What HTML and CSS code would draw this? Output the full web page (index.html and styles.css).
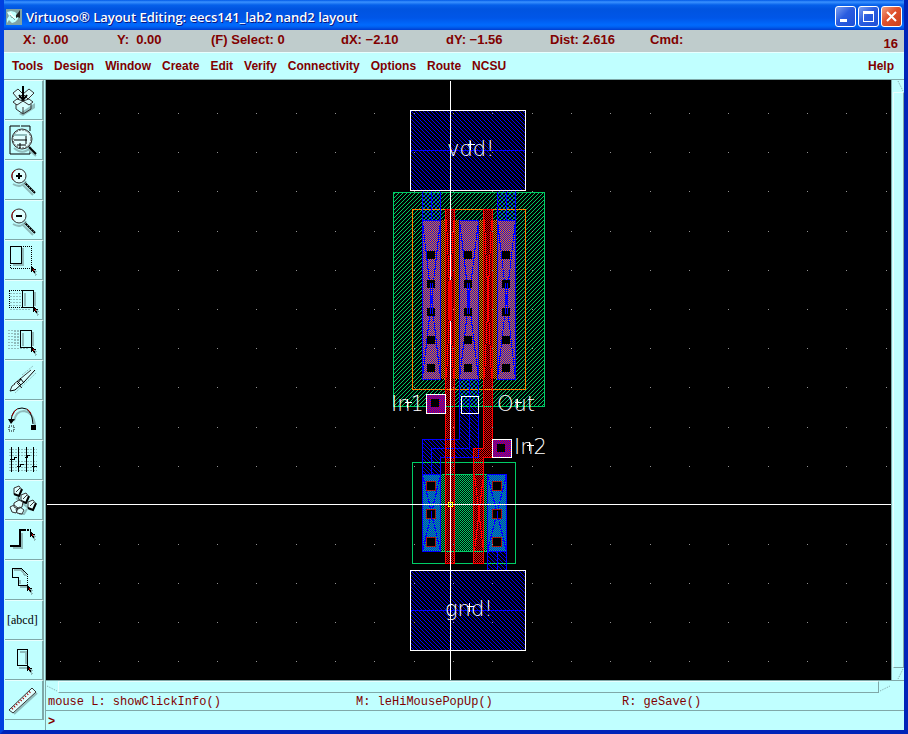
FILE: index.html
```html
<!DOCTYPE html>
<html lang="en">
<head>
    <meta charset="UTF-8">
    <meta name="viewport" content="width=device-width, initial-scale=1.0">
    <title>Virtuoso® Layout Editing: eecs141_lab2 nand2 layout</title>
    <link rel="stylesheet" href="styles.css">
</head>
<body>
    <!-- Shared cursor shape -->
    <svg class="defs" aria-hidden="true">
        <symbol id="cursor" viewBox="0 0 8 12" overflow="visible">
            <path class="shade" d="M2 3v8l2-2 2 4 2-1-2-4h3z"/>
            <path d="M0 0v8l2-2 2 4 2-1-2-4h3z"/>
            <path class="red" d="M3 4h1v2h-1z"/>
        </symbol>
    </svg>

    <header class="titlebar">
        <svg class="app-icon" viewBox="0 0 16 16">
            <rect width="16" height="16" fill="#7fa3a5"/>
            <path d="M1 3l4-1 4 1 3 3v4l-3 3-3 1-3-3-2 3v-4l2-3z" fill="#c0ffff"/>
            <path d="M12 4l2-3v8l-2-1-2 1v-3z" fill="#222"/>
            <path d="M6 8l3 3M4 6l2 3" stroke="#7fa3a5"/>
            <path d="M2 4l8 5M4 3l4 6" stroke="#fff"/>
        </svg>
        <h1>Virtuoso® Layout Editing: eecs141_lab2 nand2 layout</h1>
        <button class="win-btn" aria-label="Minimize"><svg viewBox="0 0 19 19"><path d="M4 12h7v3h-7z" fill="#fff"/></svg></button>
        <button class="win-btn" aria-label="Maximize"><svg viewBox="0 0 19 19"><path d="M4 4h11v11h-11zM5 7v7h9v-7z" fill="#fff" fill-rule="evenodd"/></svg></button>
        <button class="win-btn close" aria-label="Close"><svg viewBox="0 0 19 19"><path d="M5 5l9 9M14 5l-9 9" stroke="#fff" stroke-width="2"/></svg></button>
    </header>

    <div class="status">
        <span>X:  0.00</span>
        <span>Y:  0.00</span>
        <span>(F) Select: 0</span>
        <span>dX: −2.10</span>
        <span>dY: −1.56</span>
        <span>Dist: 2.616</span>
        <span>Cmd:</span>
        <span class="count">16</span>
    </div>

    <nav class="menu">
        <button>Tools</button>
        <button>Design</button>
        <button>Window</button>
        <button>Create</button>
        <button>Edit</button>
        <button>Verify</button>
        <button>Connectivity</button>
        <button>Options</button>
        <button>Route</button>
        <button>NCSU</button>
        <button class="help">Help</button>
    </nav>

    <div class="work">
        <div class="toolbar">
            <button aria-label="Save"><svg viewBox="0 0 38 38">
                <path class="shade" d="M14 33l4 2 12-8v-5l-12 8z"/>
                <path class="paper" d="M8 12l5-4 5 5 6-5 5 4-4 6 3 4-10 8-10-8 4-4z"/>
                <path class="thin" d="M8 12l5-4 5 5-5 5zM18 13l6-5 5 4-6 6zM12 18l-4 3 4 3 6-4zM24 18l4 3-4 3-6-4zM11 23v5l7 5 8-5v-5M18 26v6"/>
                <path class="thick" d="M18 5v13M14 14l4 5 4-5"/>
            </svg></button>
            <button aria-label="Fit"><svg viewBox="0 0 38 38">
                <path class="line" d="M15 5h-10v28h20v-4M16 5h9v5"/>
                <path class="shade-line" d="M23 28l8 7M9 27q9 8 17-1"/>
                <circle class="lens" cx="17" cy="18" r="10"/>
                <circle class="ring" cx="17" cy="18" r="9"/>
                <path class="line" d="M9 19h13M12 24h9M15 22v5M21 13v10"/>
                <path class="shade-line" d="M9 14h13"/>
                <path class="thick" d="M24 26l7 7"/>
            </svg></button>
            <button aria-label="Zoom in"><svg viewBox="0 0 38 38">
                <path class="shade-line" d="M18 24l10 10M8 23q8 5 13-3"/>
                <path class="thick" d="M20 22l10 10"/><path class="glint" d="M20 22l9 9"/>
                <circle class="lens" cx="14" cy="15" r="7"/>
                <path class="redline" d="M8 19a7 7 0 0 1 2-10"/>
                <path class="thick" d="M11 15h6M14 12v6"/>
            </svg></button>
            <button aria-label="Zoom out"><svg viewBox="0 0 38 38">
                <path class="shade-line" d="M18 24l10 10M8 23q8 5 13-3"/>
                <path class="thick" d="M20 22l10 10"/><path class="glint" d="M20 22l9 9"/>
                <circle class="lens" cx="14" cy="15" r="7"/>
                <path class="redline" d="M8 19a7 7 0 0 1 2-10"/>
                <path class="thick" d="M11 15h6"/>
            </svg></button>
            <button aria-label="Stretch"><svg viewBox="0 0 38 38" class="crisp">
                <path class="shade-line" d="M8 24h10v-17"/>
                <path class="dots" d="M16 5h10v21M5 22v5h21"/>
                <rect class="line" x="5" y="5" width="11" height="17"/>
                <use href="#cursor" x="26" y="25" width="6" height="9"/>
            </svg></button>
            <button aria-label="Copy"><svg viewBox="0 0 38 38" class="crisp">
                <path class="fade-line" d="M5 12h11M5 15h11M5 18h11M5 21h11M5 24h11M5 28h20"/>
                <path class="dots" d="M4 9h13v17h-13z"/>
                <path class="shade-line" d="M20 12v13M30 11v14"/>
                <rect class="line" x="17" y="9" width="11" height="17"/>
                <use href="#cursor" x="28" y="25" width="6" height="9"/>
            </svg></button>
            <button aria-label="Move"><svg viewBox="0 0 38 38" class="crisp">
                <path class="fade-line" d="M3 9h12M3 12h12M3 15h12M3 18h12M3 21h12M3 24h12M3 27h21"/>
                <path class="fade-line" d="M9 10h6M9 13h6M9 16h6M9 19h6M9 22h6"/>
                <path class="shade-line" d="M18 12v13M28 11v14"/>
                <rect class="line" x="15" y="9" width="11" height="17"/>
                <use href="#cursor" x="26" y="25" width="6" height="9"/>
            </svg></button>
            <button aria-label="Delete"><svg viewBox="0 0 38 38">
                <path class="fade-line" d="M10 32l21-20M17 14l11-9"/>
                <path class="paper" d="M5 30l2-5 19-16 5-1-4 6-18 16z"/>
                <path class="thin" d="M9 23l17-14M5 30l2-5 3-2M12 22l5 5"/>
                <path class="line" d="M5 30l5-1 9-8 11-12"/>
                <path class="line" d="M12 20l4 4M15 17l4 5M13 22l3-4"/>
            </svg></button>
            <button aria-label="Undo"><svg viewBox="0 0 38 38">
                <path class="shade-line" d="M9 20q2-10 10-10q9 1 11 14"/>
                <path class="line" d="M6 20q1-13 11-13q10 0 11 16"/>
                <path class="redline" d="M7 15q2-5 5-7M22 8q3 2 4 5"/>
                <path d="M3 18h7l-4 5zM26 24h5v5h-5z"/>
                <rect class="dots" x="4" y="25" width="5" height="5"/>
            </svg></button>
            <button aria-label="Edit properties"><svg viewBox="0 0 38 38" class="crisp">
                <path class="fade-line" d="M4 8h28M4 11h28M4 14h28M4 20h28M4 23h28M4 26h28M4 29h28"/>
                <path class="line" d="M6 6v25M13 6v25M21 6v25M28 6v25"/>
                <path class="line" d="M5 18h4v-2h3M12 25h3v-2h4M20 16h2v-2h3M27 25h5"/>
            </svg></button>
            <button aria-label="Instance"><svg viewBox="0 0 38 38">
                <path class="shade-line" d="M11 17l15 12M14 33h5l3-5"/>
                <path class="lens" d="M9 7l5-2 3 4-3 6-5-2zM16 14l5-2 3 4-3 6-5-2zM23 21l5-2 3 4-3 6-5-2z"/>
                <path class="thick" d="M9 13l5 2 3-7M16 20l5 2 3-7M23 27l5 2 3-7"/>
                <path class="thin" d="M11 11l4-4M18 18l4-4M25 25l4-4M13 16l3 6"/>
                <path class="lens" d="M9 22l5-3 4 2-1 5-4 2-4-2zM5 26l4-2 4 3-2 5-4-1zM11 28l4-2 4 3-2 4-5-1z"/>
            </svg></button>
            <button aria-label="Path"><svg viewBox="0 0 38 38" class="crisp">
                <path class="shade-line" d="M8 27h9v-15"/>
                <path class="thick" d="M5 25h10v-16h4"/>
                <path class="thick dashed" d="M19 9h7"/>
                <use href="#cursor" x="25" y="10" width="6" height="9"/>
            </svg></button>
            <button aria-label="Polygon"><svg viewBox="0 0 38 38" class="crisp">
                <path class="shade-line" d="M9 9h7l5 6M15 19v4M15 26h7"/>
                <path class="line" d="M22 24h-9v-8h-6v-9h9l6 6"/>
                <path class="dots" d="M22 13v12"/>
                <use href="#cursor" x="22" y="24" width="6" height="9"/>
            </svg></button>
            <button class="label-btn">[abcd]</button>
            <button aria-label="Rectangle"><svg viewBox="0 0 38 38" class="crisp">
                <path class="shade-line" d="M15 11h6v12M14 27h8"/>
                <rect class="line" x="12" y="8" width="10" height="16"/>
                <use href="#cursor" x="22" y="24" width="6" height="9"/>
            </svg></button>
            <button aria-label="Ruler"><svg viewBox="0 0 38 38">
                <path class="shade-line" d="M9 33l23-21"/>
                <path class="lens" d="M4 29l23-22 4 4-23 21z"/>
                <path class="redline ticks" d="M7 28l19-18"/>
            </svg></button>
        </div>

        <div class="editor">
            <div class="view">
                <svg class="canvas" viewBox="46 80 845 600" preserveAspectRatio="xMidYMid slice">
                    <defs>
                        <pattern id="metal" width="4" height="4" patternUnits="userSpaceOnUse">
                            <path d="M0 0h1v1h-1zM1 1h1v1h-1zM2 2h1v1h-1zM3 3h1v1h-1z" fill="#00f"/>
                        </pattern>
                        <pattern id="well" width="4" height="4" patternUnits="userSpaceOnUse">
                            <path d="M3 0h1v1h-1zM2 1h1v1h-1zM1 2h1v1h-1zM0 3h1v1h-1z" fill="#00cc66"/>
                        </pattern>
                        <!-- 4x4 checkerboard, reused in every layer colour -->
                        <path id="even" d="M0 0h1v1h-1zM2 0h1v1h-1zM1 1h1v1h-1zM3 1h1v1h-1zM0 2h1v1h-1zM2 2h1v1h-1zM1 3h1v1h-1zM3 3h1v1h-1z"/>
                        <path id="odd" d="M1 0h1v1h-1zM3 0h1v1h-1zM0 1h1v1h-1zM2 1h1v1h-1zM1 2h1v1h-1zM3 2h1v1h-1zM0 3h1v1h-1zM2 3h1v1h-1z"/>
                        <pattern id="pdiff" width="4" height="4" patternUnits="userSpaceOnUse"><use href="#even" fill="#ff8000"/></pattern>
                        <pattern id="ndiff" width="4" height="4" patternUnits="userSpaceOnUse"><use href="#even" fill="#00cc66"/></pattern>
                        <pattern id="poly" width="4" height="4" patternUnits="userSpaceOnUse"><use href="#odd" fill="#f00"/></pattern>
                        <pattern id="pmetal" width="4" height="4" patternUnits="userSpaceOnUse">
                            <use href="#even" fill="#00f"/>
                            <use href="#odd" fill="#ff8000"/>
                        </pattern>
                        <pattern id="nmetal" width="4" height="4" patternUnits="userSpaceOnUse">
                            <use href="#even" fill="#00f"/>
                            <use href="#odd" fill="#00cc66"/>
                        </pattern>
                        <pattern id="pad" width="4" height="4" patternUnits="userSpaceOnUse">
                            <use href="#even" fill="#00f"/>
                            <use href="#odd" fill="#f00"/>
                        </pattern>
                        <rect id="cut" width="8" height="8"/>
                        <g id="ncut">
                            <rect width="8" height="8"/>
                            <path d="M-1 -1h10v10h-10zM0 0v8h8v-8z" fill="#a01818" fill-rule="evenodd"/>
                        </g>
                        <path id="plus" d="M-3 0h7M0 -4v9"/>
                    </defs>
                    <rect x="46" y="80" width="845" height="600"/>

                    <!-- fills -->
                    <rect x="393" y="192" width="152" height="215" fill="url(#well)"/>
                    <rect x="422" y="220" width="94" height="159"/>
                    <rect x="422" y="220" width="94" height="159" fill="url(#pdiff)"/>
                    <rect x="422" y="474" width="85" height="78" fill="url(#ndiff)"/>
                    <g fill="url(#metal)">
                        <rect x="410" y="110" width="116" height="81"/>
                        <rect x="410" y="570" width="116" height="81"/>
                        <rect x="422" y="191" width="19" height="29"/>
                        <rect x="497" y="191" width="19" height="29"/>
                        <path d="M459 379h20v79h-38v16h-19v-35h37z"/>
                        <rect x="487" y="552" width="20" height="18"/>
                    </g>
                    <g fill="url(#pmetal)">
                        <rect x="422" y="220" width="19" height="159"/>
                        <rect x="459" y="220" width="20" height="159"/>
                        <rect x="497" y="220" width="19" height="159"/>
                    </g>
                    <g fill="url(#nmetal)">
                        <rect x="422" y="474" width="19" height="78"/>
                        <rect x="487" y="474" width="20" height="78"/>
                    </g>
                    <rect x="445" y="209" width="10" height="355"/>
                    <path d="M483 209h10v249h-9v106h-11v-116h10z"/>
                    <g fill="url(#poly)">
                        <rect x="445" y="209" width="10" height="355"/>
                        <path d="M483 209h10v249h-9v106h-11v-116h10z"/>
                    </g>

                    <!-- outlines -->
                    <g class="strokes">
                        <rect x="393" y="192" width="151" height="214" stroke="#00cc66"/>
                        <path d="M412 462h103v101h-103zM441 474h46M441 551h46" stroke="#00cc66"/>
                        <rect x="412" y="209" width="113" height="180" stroke="#ff8000"/>
                        <path d="M422 191v188h18v-188M459 379v-159h19v159zM497 191v188h18v-188M422 220h18M497 220h18M431 191v29M506 191v29M410 150h115M410 610h115" stroke="#00f"/>
                        <path d="M459 379v60h-37v35M478 379v78h-38v17M469 379v69h-38v26M422 474h18v77h-18zM487 474h19v77h-19zM487 551v19M506 551v19M497 551v19" stroke="#00f"/>
                        <path d="M422 220l18 158M440 220l-18 158M459 220l19 158M478 220l-19 158M497 220l18 158M515 220l-18 158M422 474l18 77M440 474l-18 77M487 474l19 77M506 474l-19 77" stroke="#00f"/>
                        <path d="M445 209h9v354h-9zM483 209h9v248h-9v106h-10v-115h10zM446 220l7 158M453 220l-7 158M484 220l7 158M491 220l-7 158M474 474l9 77M483 474l-9 77M448 280v39M451 280v39" stroke="#f00"/>
                    </g>

                    <!-- contacts -->
                    <use href="#cut" x="427" y="251"/><use href="#cut" x="464" y="251"/><use href="#cut" x="502" y="251"/>
                    <use href="#cut" x="427" y="280"/><use href="#cut" x="464" y="280"/><use href="#cut" x="502" y="280"/>
                    <use href="#cut" x="427" y="308"/><use href="#cut" x="464" y="308"/><use href="#cut" x="502" y="308"/>
                    <use href="#cut" x="427" y="336"/><use href="#cut" x="464" y="336"/><use href="#cut" x="502" y="336"/>
                    <use href="#cut" x="427" y="364"/><use href="#cut" x="464" y="364"/><use href="#cut" x="502" y="364"/>
                    <use href="#ncut" x="427" y="482"/><use href="#ncut" x="493" y="482"/>
                    <use href="#ncut" x="427" y="510"/><use href="#ncut" x="493" y="510"/>
                    <use href="#ncut" x="427" y="538"/><use href="#ncut" x="493" y="538"/>
                    <path d="M430 283v31M432 283v31M467 283v31M469 283v31M505 283v31M507 283v31M431 511v8M497 511v8" stroke="#00f"/>

                    <!-- pins -->
                    <rect x="426" y="394" width="20" height="20" fill="url(#pad)"/>
                    <rect x="492" y="439" width="20" height="19" fill="url(#pad)"/>
                    <use href="#cut" x="431" y="399"/><use href="#cut" x="497" y="444"/>

                    <g class="strokes">
                        <path class="grid-dots" d="M59 113H891M59 152H891M59 191H891M59 231H891M59 270H891M59 309H891M59 348H891M59 387H891M59 427H891M59 466H891M59 544H891M59 583H891M59 622H891M59 661H891"/>
                        <path d="M410 110h115v80h-115zM410 570h115v80h-115zM426 394h19v19h-19zM461 396h17v17h-17zM492 439h19v18h-19z" stroke="#fff"/>
                        <path d="M450 80v199M450 320v360M46 504h845" stroke="#fff"/>
                        <rect x="448" y="502" width="4" height="4" stroke="#ff0"/>
                        <g stroke="#fff">
                            <use href="#plus" x="470" y="144"/>
                            <use href="#plus" x="407" y="402"/>
                            <use href="#plus" x="517" y="402"/>
                            <use href="#plus" x="529" y="445"/>
                            <use href="#plus" x="469" y="606"/>
                        </g>
                    </g>
                    <g class="labels">
                        <text x="447" y="156">vdd!</text>
                        <text x="391" y="411">In1</text>
                        <text x="497" y="411">Out</text>
                        <text x="514" y="454">In2</text>
                        <text x="445" y="616">gnd!</text>
                    </g>
                </svg>
                <div class="vscroll">
                    <svg class="arrow" viewBox="0 0 12 12"><path d="M5 1l5 10"/></svg>
                    <div class="thumb"></div>
                    <svg class="arrow" viewBox="0 0 12 12"><path d="M10 1l-5 10"/></svg>
                </div>
            </div>
            <div class="hscroll">
                <svg class="arrow" viewBox="0 0 12 12"><path d="M1 5l10 5"/></svg>
                <div class="thumb"></div>
                <svg class="arrow" viewBox="0 0 12 12"><path d="M1 10l10-5"/></svg>
            </div>
            <div class="mouse">
                <span>mouse L: showClickInfo()</span>
                <span>M: leHiMousePopUp()</span>
                <span>R: geSave()</span>
            </div>
            <div class="prompt">
                <label for="cmd">&gt;</label>
                <input type="text" id="cmd">
            </div>
        </div>
    </div>
</body>
</html>
```

FILE: styles.css
```css
* { margin: 0; padding: 0; box-sizing: border-box; }
body {
    display: flex;
    flex-direction: column;
    height: 100vh;
    background-color: #c0ffff;
    border: 4px solid #0040e0;
    border-top: none;
    border-right-color: #0024b8;
    border-bottom-color: #0024b8;
    color: #800000;
    font-family: "Liberation Sans", Arial, sans-serif;
    font-size: 12px;
    font-weight: bold;
    overflow: hidden;
}
button {
    background: none;
    border: none;
    color: inherit;
    font: inherit;
}
.defs { position: absolute; width: 0; height: 0; }

/* title bar */
.titlebar {
    display: flex;
    align-items: center;
    gap: 2px;
    height: 30px;
    margin: 0 -4px;
    padding: 3px 6px 0;
    flex-shrink: 0;
    background: linear-gradient(#0058e6 0, #3a92ff 2px, #0560ea 5px, #0054e0 9px, #0056e8 18px, #006afe 25px, #0060f0 27px, #003dd0 30px);
    border-radius: 6px 6px 0 0;
}
.app-icon { width: 16px; height: 16px; margin-right: 2px; }
.titlebar h1 {
    flex: 1;
    color: #fff;
    font-family: "Open Sans", "Noto Sans", sans-serif;
    font-size: 13px;
    font-weight: 600;
    text-shadow: 1px 1px 0 #0a1883;
    white-space: nowrap;
}
.win-btn {
    width: 21px;
    height: 21px;
    border: 1px solid #fff;
    border-radius: 3px;
    background: linear-gradient(135deg, #7c9ff0, #2a5de0 45%, #1d4fd6);
}
.win-btn svg { display: block; width: 19px; height: 19px; }
.win-btn.close { background: linear-gradient(135deg, #f0a080, #e0502c 45%, #c8401c); }

/* coordinates */
.status {
    display: grid;
    grid-template-columns: 94px 94px 130px 105px 104px 100px 1fr auto;
    height: 22px;
    flex-shrink: 0;
    padding: 0 6px 0 19px;
    background-color: #bfcccc;
    font-size: 13px;
    line-height: 20px;
    white-space: pre;
}
.status .count { padding-top: 4px; }

.menu {
    display: flex;
    gap: 11px;
    height: 28px;
    flex-shrink: 0;
    padding: 0 10px 0 8px;
    border-top: 1px solid #e8ffff;
    border-bottom: 1px solid #7fa8a8;
}
.menu .help { margin-left: auto; }

.work { display: flex; flex: 1; min-height: 0; }

/* tool icons */
.toolbar {
    display: flex;
    flex-direction: column;
    width: 42px;
    padding-right: 1px;
    padding-left: 1px;
    border-right: 1px solid #7fa8a8;
}
.toolbar button {
    height: 40px;
    border-right: 2px solid #7fa8a8;
    border-bottom: 1px solid #7fa8a8;
    border-top: 1px solid #e8ffff;
}
.toolbar svg { display: block; width: 38px; height: 38px; overflow: visible; }
.crisp { shape-rendering: crispEdges; }
.toolbar .label-btn {
    font-family: "Liberation Serif", serif;
    font-size: 12px;
    font-weight: normal;
    color: #000;
    text-align: left;
    padding-left: 2px;
}
.line, .thin, .thick, .dots, .ring { fill: none; stroke: #000; stroke-width: 1; }
.thick { stroke-width: 2; }
.thin { stroke: #333; }
.dots { stroke-dasharray: 1 1; }
.dashed { stroke-dasharray: 2 1; }
.ring { stroke: #555; stroke-dasharray: 2 1; }
.lens { fill: #e0ffff; stroke: #333; }
.paper { fill: #d8ffff; }
.shade { fill: #90bcbc; }
.shade-line { fill: none; stroke: #90bcbc; stroke-width: 2; }
.fade-line { fill: none; stroke: #90bcbc; stroke-width: 1; stroke-dasharray: 2 1; }
.glint { stroke: #aabcbc; stroke-dasharray: 1 2; }
.red { fill: #c00000; }
.redline { fill: none; stroke: #a00000; }
.ticks { stroke-dasharray: 1 2; stroke-width: 2; }

/* drawing area */
.editor { display: flex; flex-direction: column; flex: 1; min-width: 0; }
.view { display: flex; flex: 1; min-height: 0; }
.canvas { flex: 1; min-width: 0; height: 100%; background-color: #000; shape-rendering: crispEdges; }
.strokes { fill: none; transform: translate(0.5px, 0.5px); }
.grid-dots { stroke: #909090; stroke-dasharray: 1 38 1 38 1 39; }
.labels {
    fill: #fff;
    font-family: "DejaVu Sans Light", "DejaVu Sans", sans-serif;
    font-size: 21px;
    font-weight: 200;
}

.vscroll {
    display: flex;
    flex-direction: column;
    width: 13px;
    padding-left: 1px;
    border-left: 1px solid #7fa8a8;
}
.hscroll {
    display: flex;
    height: 13px;
    padding-right: 13px;
    border-top: 1px solid #7fa8a8;
}
.thumb {
    flex: 1;
    border: 1px solid #7fa8a8;
    border-top-color: #e8ffff;
    border-left-color: #e8ffff;
}
.arrow { width: 12px; height: 12px; fill: none; stroke: #7fa8a8; stroke-dasharray: 1 1; }

.mouse {
    display: grid;
    grid-template-columns: 308px 266px 1fr;
    height: 18px;
    padding-left: 2px;
    border-bottom: 1px solid #7fa8a8;
    font-family: "Liberation Mono", monospace;
    font-weight: normal;
    line-height: 19px;
}
.prompt {
    display: flex;
    height: 19px;
    padding-left: 2px;
    font-family: "Liberation Mono", monospace;
    line-height: 22px;
}
.prompt input {
    flex: 1;
    border: none;
    outline: none;
    background: none;
    color: inherit;
    font: inherit;
}
```
